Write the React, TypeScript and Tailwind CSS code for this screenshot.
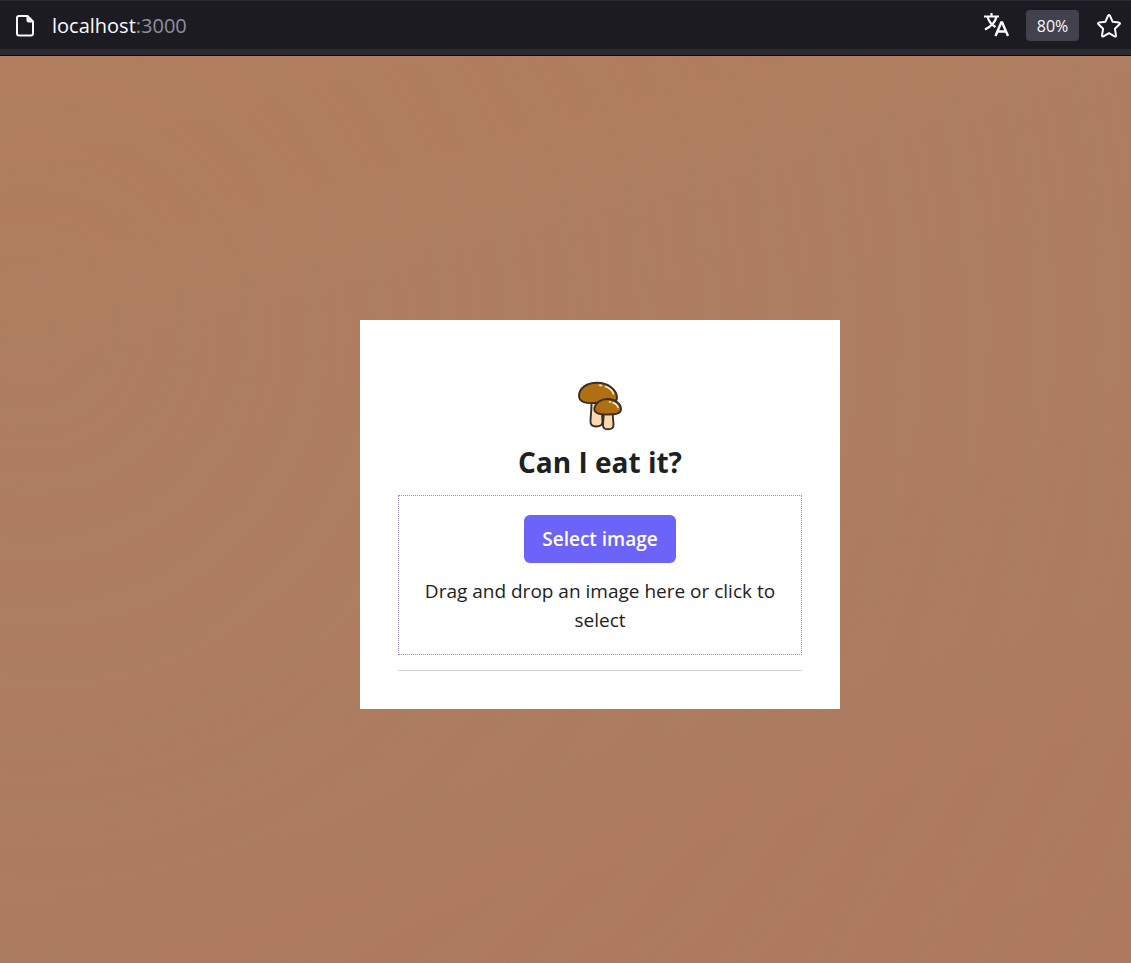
import { useRef } from "react";

function PageIcon() {
  return (
    <svg width="20" height="24" viewBox="0 0 20 24" fill="none" aria-hidden="true">
      <path d="M4 2h8.500l5.500 5.500V19.500a2 2 0 0 1-2 2H4a2 2 0 0 1-2-2V4a2 2 0 0 1 2-2z" stroke="#fbfbfe" strokeWidth="2" strokeLinejoin="round" />
      <path d="M11.500 2v4.500a2 2 0 0 0 2 2H18z" fill="#fbfbfe" />
    </svg>
  );
}

function TranslateIcon() {
  return (
    <svg width="26" height="26" viewBox="0 0 26 26" fill="none" stroke="#fbfbfe" strokeWidth="2.200" aria-hidden="true">
      <path d="M1 3.500h15M8.500 0v3.500M13.500 3.500C12.500 8.500 8 13.500 2 16.500M4.500 3.500C5.500 8 9 12 12.500 14" />
      <path d="M12.500 23l5.700-13.500h1L25 23M14.500 18.500h8.500" strokeWidth="2.400" />
    </svg>
  );
}

function StarIcon() {
  return (
    <svg width="26" height="26" viewBox="0 0 26 26" fill="none" stroke="#fbfbfe" strokeWidth="2" strokeLinejoin="round" aria-hidden="true">
      <path d="M12.100 2.700Q13 1.200 13.900 2.700L16.700 8.800L23 9.600Q24.700 10 23.500 11.300L18.900 15.800L20 22.300Q20.100 24 18.600 23.300L13 20.200L7.400 23.300Q5.900 24 6 22.300L7.100 15.800L2.500 11.300Q1.300 10 3 9.600L9.300 8.800Z" />
    </svg>
  );
}

function Mushrooms() {
  return (
    <svg width="48" height="52" viewBox="0 0 48 52" strokeLinejoin="round" role="img" aria-label="Mushrooms">
      <g stroke="#3a2f26" strokeWidth="1.900">
        <path d="M15.500 23C15.500 31 14.500 37 14.500 41.500C14.500 45.500 17 46.500 20 46.500C24 46.500 26.500 45 26.500 42L25.500 23z" fill="#f8d9b0" />
        <path d="M3 16C3 8 11 2.800 21 2.800C32 2.800 41 9.500 41 18C41 22.500 35 22.500 23 22.500C9 24.500 3 21.500 3 16z" fill="#b06f12" />
        <path d="M28 32L27 44C26.500 48 28.500 49.300 32 49.300C36 49.300 37.800 48 37.500 44L36.500 32z" fill="#f8d9b0" />
        <path d="M18.500 28C19.500 22.500 25 19 31.500 19C39 19 45 23.500 45 29C45 34 39 34.500 31 34.500C23 34.500 17.500 33 18.500 28z" fill="#b06f12" />
      </g>
      <g fill="none" stroke="#fff4d9" strokeWidth="1.500" strokeLinecap="round">
        <path d="M29.500 6.500C33.500 8 36.500 10.500 37.500 14M23.500 5.200L25.500 5.600M37 22.800C39.500 23.800 41.500 25.500 42 27.500M33.500 21.800L34.500 22" />
      </g>
    </svg>
  );
}

function Toolbar() {
  return (
    <header className="flex h-14 items-center border-t border-b border-t-[#2b2a33] border-b-[#0c0c0d] bg-[#1c1b22] pl-[15px] pr-[9px] shadow-[inset_0_-6px_0_#2b2a33]">
      <div className="flex flex-1 items-center gap-[17px] pb-[5px]">
        <PageIcon />
        <span className="text-xl leading-6 text-[#8f8f9d]">
          <span className="text-[#fbfbfe]">localhost</span>:3000
        </span>
      </div>
      <div className="flex items-center gap-[17px] pb-[5px]">
        <button type="button" aria-label="Translate page"><TranslateIcon /></button>
        <button type="button" className="h-[31px] w-[53px] rounded bg-[#42414d] text-base text-[#fbfbfe]">80%</button>
        <button type="button" aria-label="Bookmark page"><StarIcon /></button>
      </div>
    </header>
  );
}

export default function App() {
  const fileInput = useRef<HTMLInputElement>(null);
  return (
    <div className="flex min-h-screen flex-col font-['Open_Sans','Noto_Sans',sans-serif]">
      <Toolbar />
      <main className="flex flex-1 items-center justify-center bg-[#ae7c5f] bg-[repeating-radial-gradient(circle_at_30px_275px,#ae826300_0px,#a9846620_26px,#b47a5e1c_48px,#ae826300_66px),linear-gradient(165deg,#b07d5d,#ad7d61_50%,#ad795d)] pl-[69px] pt-2.5">
        <section className="flex w-[480px] flex-col items-center bg-white px-[38px] pt-[60px] pb-[38px] text-[#1c2121]">
          <Mushrooms />
          <h1 className="mt-3 mb-[15px] text-[28px] leading-9 font-bold">Can I eat it?</h1>
          <div className="flex w-full flex-col items-center gap-3.5 border border-dotted border-[#8f89d6] p-[19px]">
            <button
              type="button"
              onClick={() => fileInput.current?.click()}
              className="h-12 w-[152px] rounded-md bg-[#6c63f8] text-[19px] font-semibold text-white"
            >
              Select image
            </button>
            <input ref={fileInput} type="file" accept="image/*" aria-label="Image" className="hidden" />
            <p className="text-center text-[19px] leading-[29px]">Drag and drop an image here or click to select</p>
          </div>
          <hr className="mt-[15px] w-full border-[#d3d5d7]" />
        </section>
      </main>
    </div>
  );
}
